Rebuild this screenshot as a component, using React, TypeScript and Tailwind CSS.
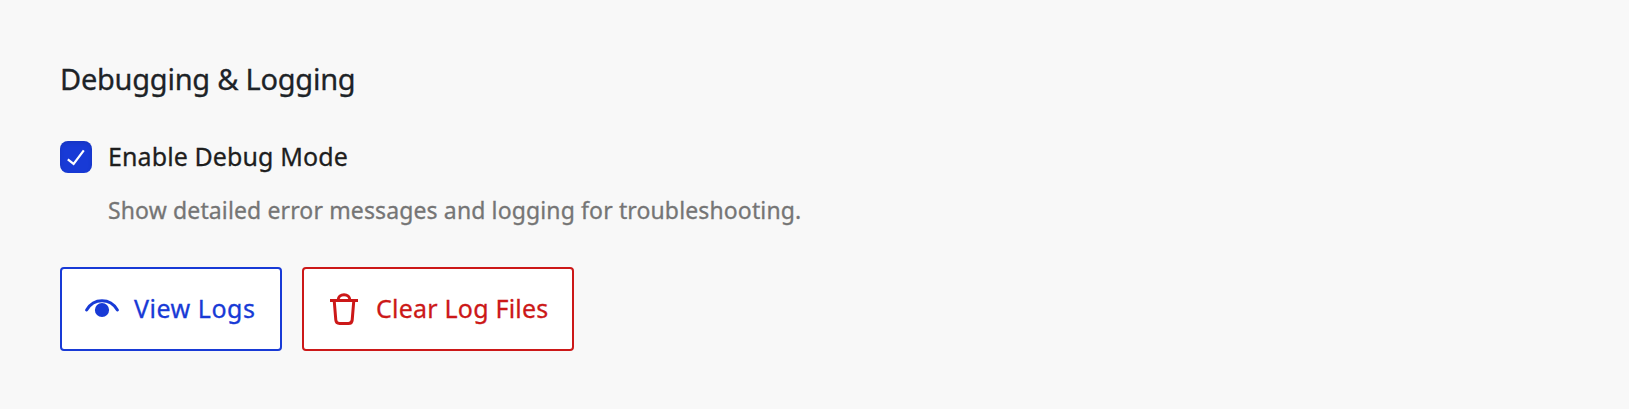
import React from "react";

const EyeIcon = () => (
  <svg className="h-10 w-10 shrink-0" viewBox="0 0 40 40" fill="none">
    <path d="M4.6 21C12 8.8 28 8.8 35.4 21" stroke="currentColor" strokeWidth="3" strokeLinecap="round" />
    <circle cx="20" cy="21" r="7.1" fill="currentColor" />
  </svg>
);

const TrashIcon = () => (
  <svg className="h-10 w-10 shrink-0" viewBox="0 0 40 40" fill="none" stroke="currentColor" strokeWidth="3">
    <path d="M6 11.5H34" />
    <path d="M14 11.5C14 3.7 26 3.7 26 11.5" />
    <path d="M10.2 11.5L11.8 31Q12.1 34.5 15.6 34.5H24.4Q27.9 34.5 28.2 31L29.8 11.5" />
  </svg>
);

export default function App() {
  return (
    <main className="h-[409px] w-full bg-[#f8f8f8] px-15 pt-[59px] font-['Noto_Sans','Liberation_Sans',sans-serif] [-webkit-text-stroke:0.3px]">
      <h2 className="h-10 whitespace-nowrap text-[29px] leading-10 tracking-[-0.25px] text-[#1d2327]">Debugging &amp; Logging</h2>
      <label className="mt-[42px] flex h-8 items-center gap-4">
        <span className="flex h-8 w-8 items-center justify-center rounded-lg bg-[#183ad6] shadow-[inset_0_2px_4px_rgba(0,0,0,0.1)]">
          <svg className="h-8 w-8" viewBox="0 0 32 32" fill="none" stroke="white" strokeWidth="2.2">
            <path d="M7.8 18.4L13.6 22.9L23.8 9.4" />
          </svg>
        </span>
        <span className="h-8 whitespace-nowrap text-[25px] leading-[31px] tracking-[0.1px] text-[#1e1e1e]">Enable Debug Mode</span>
      </label>
      <p className="mt-[21px] ml-12 h-8 whitespace-nowrap text-[23px] leading-8 tracking-[0.13px] text-[#757575]">
        Show detailed error messages and logging for troubleshooting.
      </p>
      <div className="mt-[41px] flex gap-5">
        <button className="flex h-[84px] w-[222px] items-center gap-3 rounded border-2 border-[#183ad6] bg-white pl-5 text-[25px] leading-8 text-[#183ad6]">
          <EyeIcon />
          <span className="whitespace-nowrap pb-0.5 tracking-[0.52px]">View Logs</span>
        </button>
        <button className="flex h-[84px] w-[272px] items-center gap-3 rounded border-2 border-[#cc1818] bg-white pl-5 text-[25px] leading-8 text-[#cc1818]">
          <TrashIcon />
          <span className="whitespace-nowrap pb-0.5 tracking-[0.22px]">Clear Log Files</span>
        </button>
      </div>
    </main>
  );
}
